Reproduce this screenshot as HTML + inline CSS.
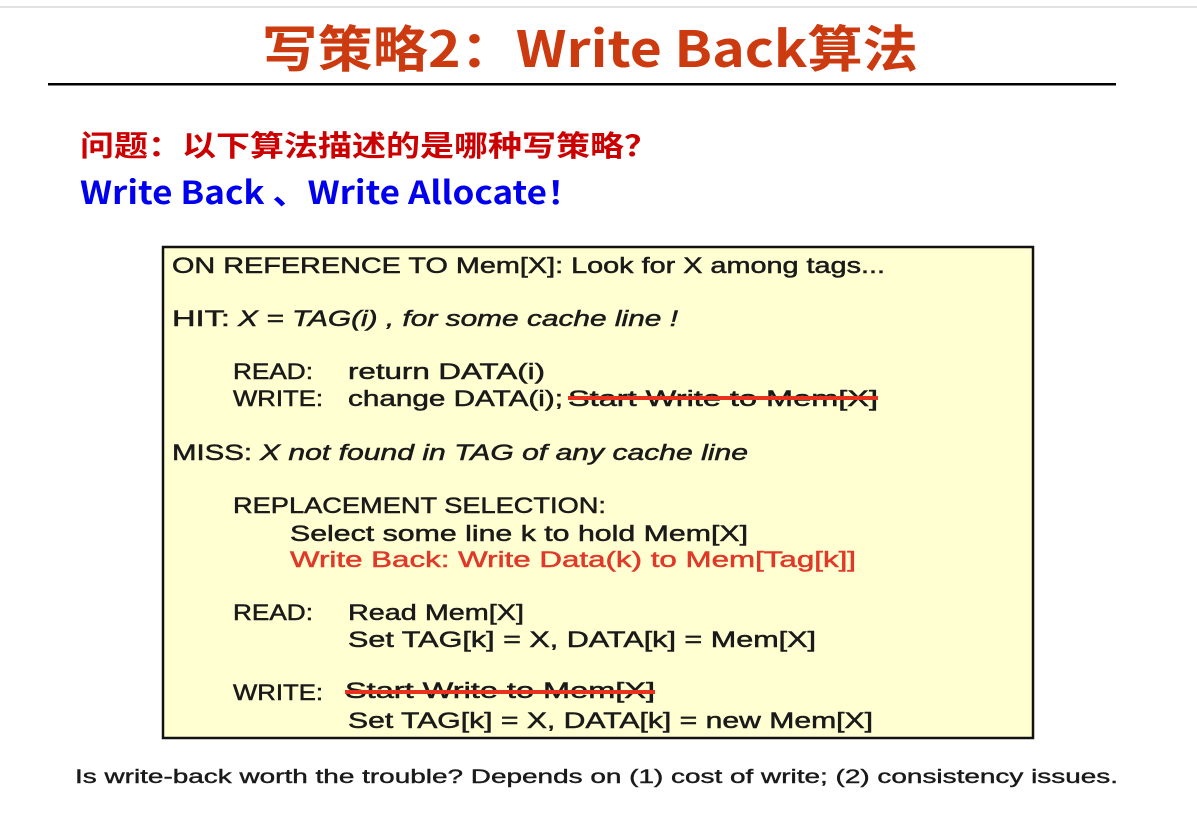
<!DOCTYPE html>
<html><head><meta charset="utf-8"><style>
html,body{margin:0;padding:0;background:#fff;width:1197px;height:830px;overflow:hidden}
svg{display:block}
.b{font-family:"Liberation Sans",sans-serif;font-size:22px;fill:#1a1a1a;stroke:#1a1a1a;stroke-width:0.5}
.i{font-style:italic}
</style></head><body>
<svg width="1197" height="830" viewBox="0 0 1197 830" xmlns="http://www.w3.org/2000/svg">
<rect x="0" y="6" width="1197" height="2" fill="#e2e2e2"/>
<text x="262" y="67" font-family="'Noto Sans CJK SC',sans-serif" font-weight="bold" font-size="50" fill="#cc3a10" textLength="656" lengthAdjust="spacingAndGlyphs">写策略2：Write Back算法</text>
<rect x="48" y="83" width="1068" height="2.5" fill="#000"/>
<text x="80" y="156" font-family="'Noto Sans CJK SC',sans-serif" font-weight="bold" font-size="29" fill="#cc0000" textLength="578" lengthAdjust="spacingAndGlyphs">问题：以下算法描述的是哪种写策略？</text>
<text x="80" y="204" font-family="'Noto Sans CJK SC',sans-serif" font-weight="bold" font-size="32" fill="#0000ee" textLength="502" lengthAdjust="spacingAndGlyphs">Write Back 、Write Allocate！</text>

<rect x="163" y="247" width="870" height="491" fill="#ffffd2" stroke="#111" stroke-width="2.5"/>

<g class="b">
<text x="172" y="273" textLength="713" lengthAdjust="spacingAndGlyphs">ON REFERENCE TO Mem[X]: Look for X among tags...</text>
<text x="172" y="326" textLength="58" lengthAdjust="spacingAndGlyphs">HIT:</text>
<text x="238" y="326" class="i" textLength="440" lengthAdjust="spacingAndGlyphs">X = TAG(i) , for some cache line !</text>
<text x="233" y="379" textLength="80" lengthAdjust="spacingAndGlyphs">READ:</text>
<text x="348" y="379" textLength="197" lengthAdjust="spacingAndGlyphs">return DATA(i)</text>
<text x="233" y="406" textLength="90" lengthAdjust="spacingAndGlyphs">WRITE:</text>
<text x="348" y="406" textLength="215" lengthAdjust="spacingAndGlyphs">change DATA(i);</text>
<text x="568" y="406" textLength="310" lengthAdjust="spacingAndGlyphs">Start Write to Mem[X]</text>
<text x="172" y="460" textLength="80" lengthAdjust="spacingAndGlyphs">MISS:</text>
<text x="260" y="460" class="i" textLength="488" lengthAdjust="spacingAndGlyphs">X not found in TAG of any cache line</text>
<text x="233" y="513" textLength="373" lengthAdjust="spacingAndGlyphs">REPLACEMENT SELECTION:</text>
<text x="290" y="541" textLength="458" lengthAdjust="spacingAndGlyphs">Select some line k to hold Mem[X]</text>
<text x="290" y="567" style="fill:#e0392a;stroke:#e0392a" textLength="566" lengthAdjust="spacingAndGlyphs">Write Back: Write Data(k) to Mem[Tag[k]]</text>
<text x="233" y="620" textLength="80" lengthAdjust="spacingAndGlyphs">READ:</text>
<text x="348" y="620" textLength="176" lengthAdjust="spacingAndGlyphs">Read Mem[X]</text>
<text x="348" y="647" textLength="468" lengthAdjust="spacingAndGlyphs">Set TAG[k] = X, DATA[k] = Mem[X]</text>
<text x="233" y="700" textLength="90" lengthAdjust="spacingAndGlyphs">WRITE:</text>
<text x="345" y="698" textLength="310" lengthAdjust="spacingAndGlyphs">Start Write to Mem[X]</text>
<text x="348" y="728" textLength="525" lengthAdjust="spacingAndGlyphs">Set TAG[k] = X, DATA[k] = new Mem[X]</text>
</g>
<rect x="568" y="396" width="310" height="4" fill="#e8321e"/>
<rect x="345" y="690" width="310" height="4" fill="#e8321e"/>

<text x="75" y="783" font-family="'Liberation Sans',sans-serif" font-size="19" fill="#1a1a1a" stroke="#1a1a1a" stroke-width="0.4" textLength="1043" lengthAdjust="spacingAndGlyphs">Is write-back worth the trouble?  Depends on (1) cost of write; (2) consistency issues.</text>
</svg>
</body></html>
